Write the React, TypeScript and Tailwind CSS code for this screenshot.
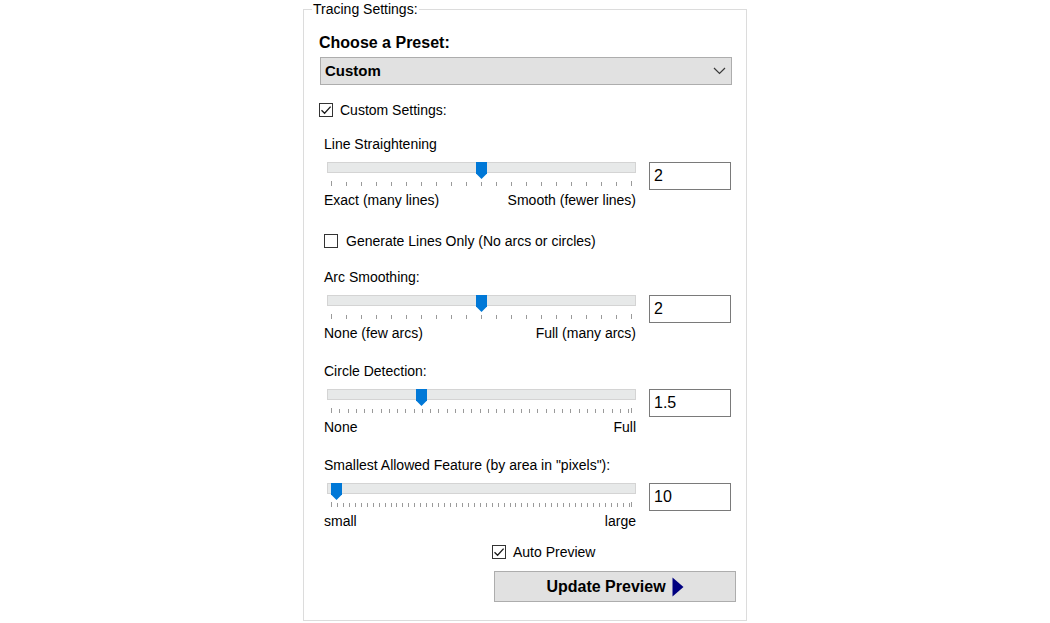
import React from "react";

function Check({ checked }: { checked: boolean }) {
  return (
    <span className="w-[14px] h-[14px] border border-[#333333] bg-white flex items-center justify-center shrink-0">
      {checked && (
        <svg width="12" height="12" viewBox="0 0 12 12">
          <path d="M1.5 6.2 L4.6 9.3 L10.6 2.6" fill="none" stroke="#1a1a1a" strokeWidth="1.3" />
        </svg>
      )}
    </span>
  );
}

type SliderProps = {
  label: string;
  frac: number;
  intervals: number;
  spacing: number;
  endTick: boolean;
  left: string;
  right: string;
  value: string;
};

function Slider({ label, frac, intervals, spacing, endTick, left, right, value }: SliderProps) {
  const xs: number[] = [];
  for (let i = 0; i <= intervals; i++) xs.push(7 + i * spacing);
  if (endTick) xs.push(307);
  const thumbX = 7 + frac * 300;
  return (
    <div className="ml-[5px]">
      <div className="h-4 leading-4 text-[14px]">{label}</div>
      <div className="mt-2 flex items-start">
        <div className="w-[312px]">
          <div className="relative">
            <div className="mt-[2px] ml-[3px] w-[309px] h-[11px] bg-[#e7e9e9] border border-[#d4d4d4]" />
            <svg className="mt-[8px] block" width="312" height="5">
              {xs.map((x, i) => (
                <rect
                  key={i}
                  x={Math.round(x)}
                  y={i === 0 || i === xs.length - 1 ? 0 : 1}
                  width="1"
                  height={i === 0 || i === xs.length - 1 ? 5 : 4}
                  fill="#9a9a9a"
                />
              ))}
            </svg>
            <svg
              className="absolute top-0"
              style={{ left: Math.round(thumbX) - 5 }}
              width="11"
              height="17"
              viewBox="0 0 11 17"
            >
              <path d="M0 0 H11 V11.5 L5.5 17 L0 11.5 Z" fill="#0078d7" />
            </svg>
          </div>
          <div className="mt-[6px] flex justify-between h-4 leading-4 text-[14px]">
            <span>{left}</span>
            <span>{right}</span>
          </div>
        </div>
        <div className="ml-[13px] mt-[2px] w-[82px] h-[28px] border border-[#7a7a7a] bg-white pl-[4px] flex items-center text-[16px]">
          {value}
        </div>
      </div>
    </div>
  );
}

export default function App() {
  return (
    <div className="w-[1050px] h-[623px] bg-white text-black font-['Liberation_Sans',Arial,sans-serif] overflow-hidden">
      <div className="pt-[9px]">
        <div className="relative mx-auto w-[444px] h-[612px] border border-[#dcdcdc] pl-[15px] pt-[24px]">
          <span className="absolute left-[8px] top-[-9px] px-[1px] bg-white h-4 leading-4 text-[14px]">
            Tracing Settings:
          </span>

          <div className="h-[18px] leading-[18px] text-[16px] font-bold">Choose a Preset:</div>

          <div className="mt-[5px] ml-[1px] w-[412px] h-[28px] bg-[#e1e1e1] border border-[#adadad] flex items-center justify-between pl-[4px] pr-[5px]">
            <span className="text-[15px] font-bold leading-[18px]">Custom</span>
            <svg width="13" height="8" viewBox="0 0 13 8">
              <path d="M1 1 L6.5 6.5 L12 1" fill="none" stroke="#3a3a3a" strokeWidth="1.2" />
            </svg>
          </div>

          <div className="mt-[17px] h-4 flex items-center gap-[7px]">
            <Check checked />
            <span className="text-[14px] leading-4">Custom Settings:</span>
          </div>

          <div className="mt-[18px]">
            <Slider
              label="Line Straightening"
              frac={0.5}
              intervals={20}
              spacing={15}
              endTick={false}
              left="Exact (many lines)"
              right="Smooth (fewer lines)"
              value="2"
            />
          </div>

          <div className="mt-[25px] ml-[5px] h-4 flex items-center gap-[8px]">
            <Check checked={false} />
            <span className="text-[14px] leading-4">Generate Lines Only (No arcs or circles)</span>
          </div>

          <div className="mt-[20px]">
            <Slider
              label="Arc Smoothing:"
              frac={0.5}
              intervals={20}
              spacing={15}
              endTick={false}
              left="None (few arcs)"
              right="Full (many arcs)"
              value="2"
            />
          </div>

          <div className="mt-[22px]">
            <Slider
              label="Circle Detection:"
              frac={0.3}
              intervals={36}
              spacing={8.25}
              endTick
              left="None"
              right="Full"
              value="1.5"
            />
          </div>

          <div className="mt-[22px]">
            <Slider
              label={'Smallest Allowed Feature (by area in "pixels"):'}
              frac={0.017}
              intervals={50}
              spacing={5.95}
              endTick
              left="small"
              right="large"
              value="10"
            />
          </div>

          <div className="mt-[15px] ml-[173px] h-4 flex items-center gap-[7px]">
            <Check checked />
            <span className="text-[14px] leading-4">Auto Preview</span>
          </div>

          <div className="mt-[11px] ml-[175px] w-[242px] h-[31px] bg-[#e1e1e1] border border-[#adadad] flex items-center justify-center gap-[6px]">
            <span className="text-[16px] font-bold leading-[18px]">Update Preview</span>
            <svg width="12" height="20" viewBox="0 0 12 20">
              <path d="M0.5 0.5 L11.5 10 L0.5 19.5 Z" fill="#000080" />
            </svg>
          </div>
        </div>
      </div>
    </div>
  );
}
